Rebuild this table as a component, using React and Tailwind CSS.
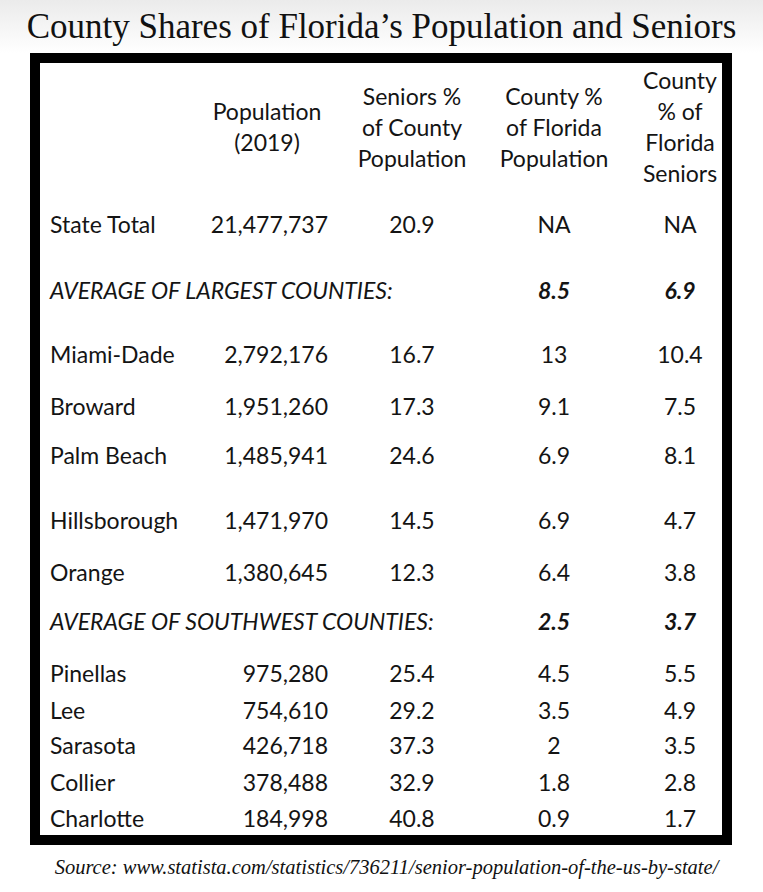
import React from "react";

const rows = [
  { type: "row", h: "h-[66px]", label: "State Total", pop: "21,477,737", sen: "20.9", c1: "NA", c2: "NA" },
  { type: "avg", h: "h-[66px]", label: "AVERAGE OF LARGEST COUNTIES:", c1: "8.5", c2: "6.9" },
  { type: "row", h: "h-[62px]", label: "Miami-Dade", pop: "2,792,176", sen: "16.7", c1: "13", c2: "10.4" },
  { type: "row", h: "h-[42px]", label: "Broward", pop: "1,951,260", sen: "17.3", c1: "9.1", c2: "7.5" },
  { type: "row", h: "h-[56px]", label: "Palm Beach", pop: "1,485,941", sen: "24.6", c1: "6.9", c2: "8.1" },
  { type: "row", h: "h-[74px]", label: "Hillsborough", pop: "1,471,970", sen: "14.5", c1: "6.9", c2: "4.7" },
  { type: "row", h: "h-[30px]", label: "Orange", pop: "1,380,645", sen: "12.3", c1: "6.4", c2: "3.8" },
  { type: "avg", h: "h-[68px]", label: "AVERAGE OF SOUTHWEST COUNTIES:", c1: "2.5", c2: "3.7" },
  { type: "row", h: "h-[36px]", label: "Pinellas", pop: "975,280", sen: "25.4", c1: "4.5", c2: "5.5" },
  { type: "row", h: "h-[38px]", label: "Lee", pop: "754,610", sen: "29.2", c1: "3.5", c2: "4.9" },
  { type: "row", h: "h-[32px]", label: "Sarasota", pop: "426,718", sen: "37.3", c1: "2", c2: "3.5" },
  { type: "row", h: "h-[42px]", label: "Collier", pop: "378,488", sen: "32.9", c1: "1.8", c2: "2.8" },
  { type: "row", h: "h-[30px]", label: "Charlotte", pop: "184,998", sen: "40.8", c1: "0.9", c2: "1.7" },
];

const grid = "grid grid-cols-[166px_122px_168px_116px_110px]";

export default function App() {
  return (
    <div className="w-[763px] h-[892px] bg-white overflow-hidden text-[#141414]">
      <div className="h-[53px] flex items-center justify-center bg-gradient-to-b from-[#ebebeb] to-white">
        <h1 className="text-[35px] leading-none text-[#111] font-['Liberation_Serif',serif] whitespace-nowrap">
          County Shares of Florida’s Population and Seniors
        </h1>
      </div>

      <div className="ml-[30px] w-[702px] border-[10px] border-black bg-white pb-[2px] font-['Lato',sans-serif] text-[23px] leading-[31px]">
        <div className={`${grid} h-[128px] items-center`}>
          <div />
          <div className="text-center">Population<br />(2019)</div>
          <div className="text-center">Seniors %<br />of County<br />Population</div>
          <div className="text-center whitespace-nowrap">County %<br />of Florida<br />Population</div>
          <div className="text-center pl-[26px]">County<br />% of<br />Florida<br />Seniors</div>
        </div>
        {rows.map((r, i) =>
          r.type === "avg" ? (
            <div key={i} className={`${grid} ${r.h} items-center`}>
              <div className="col-span-3 pl-[10px] italic whitespace-nowrap">{r.label}</div>
              <div className="text-center italic font-bold">{r.c1}</div>
              <div className="text-center italic font-bold pl-[26px]">{r.c2}</div>
            </div>
          ) : (
            <div key={i} className={`${grid} ${r.h} items-center`}>
              <div className="pl-[10px] whitespace-nowrap">{r.label}</div>
              <div className="text-right">{r.pop}</div>
              <div className="text-center">{r.sen}</div>
              <div className="text-center">{r.c1}</div>
              <div className="text-center pl-[26px]">{r.c2}</div>
            </div>
          )
        )}
      </div>

      <p className="mt-[11px] pl-[10px] text-center italic text-[20.5px] leading-[22px] text-[#111] font-['Liberation_Serif',serif] whitespace-nowrap">
        Source: www.statista.com/statistics/736211/senior-population-of-the-us-by-state/
      </p>
    </div>
  );
}
